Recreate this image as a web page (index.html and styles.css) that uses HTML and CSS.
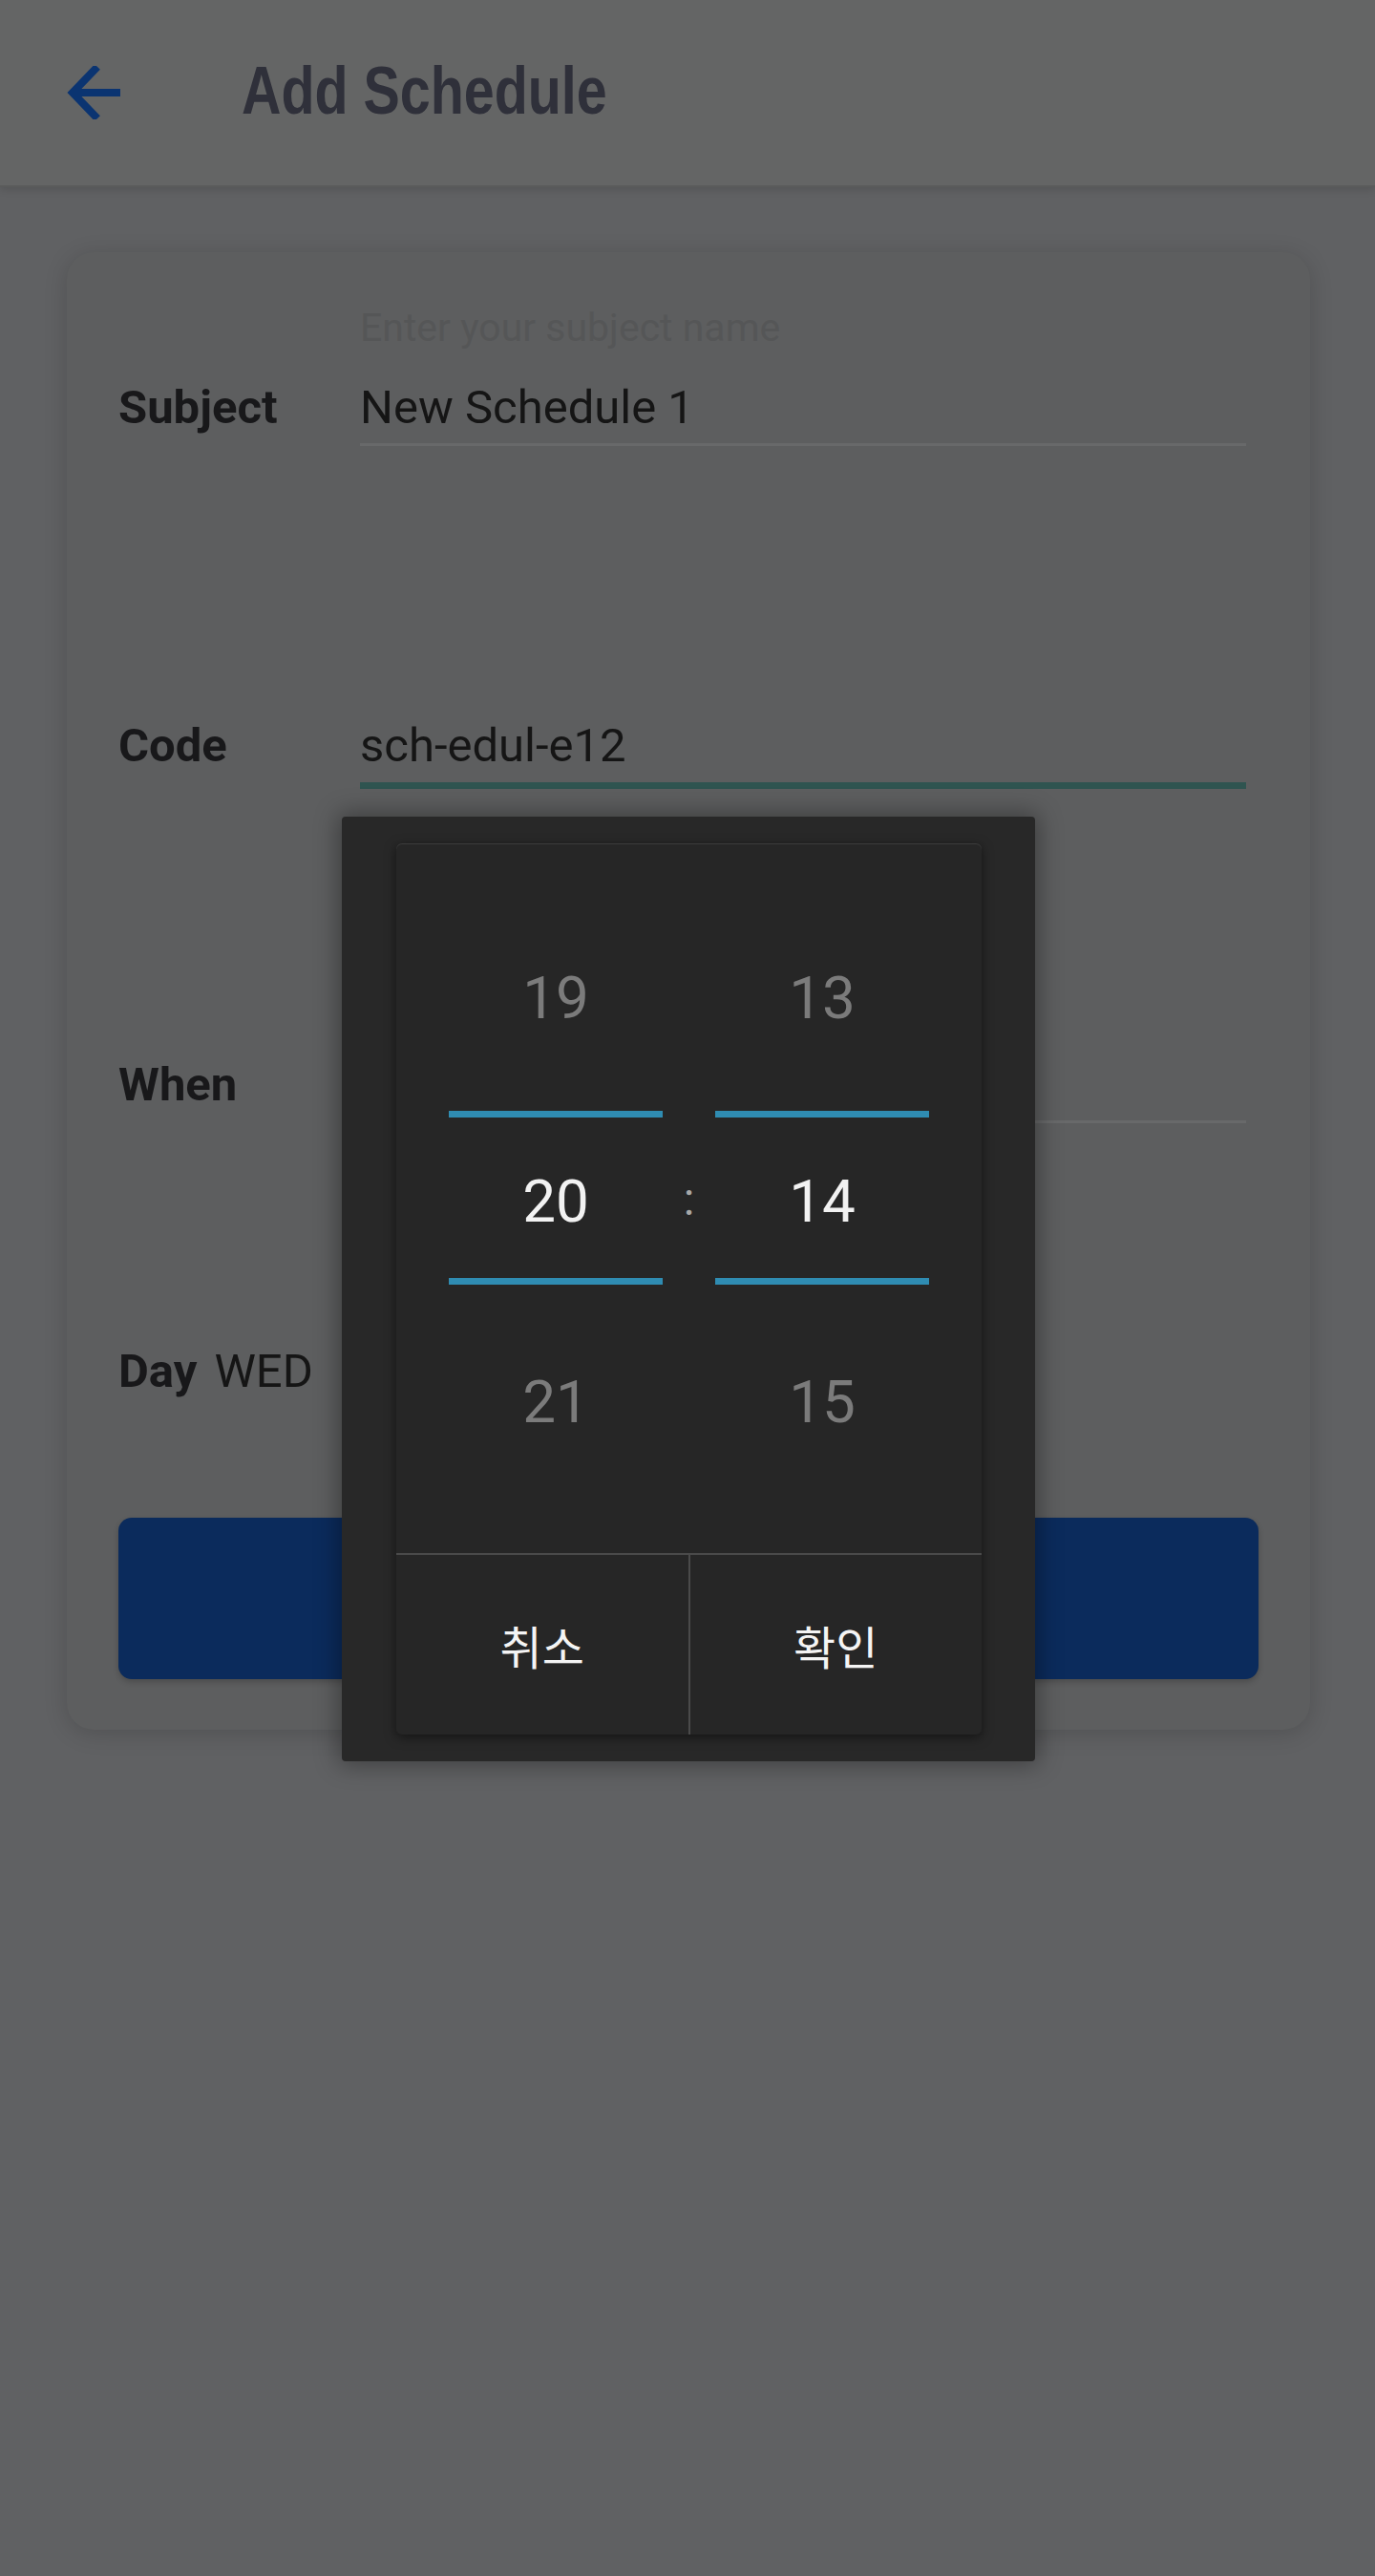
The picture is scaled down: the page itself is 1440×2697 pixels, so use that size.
FILE: index.html
```html
<!DOCTYPE html>
<html lang="en">
<head>
<meta charset="utf-8">
<title>Add Schedule</title>
<link rel="stylesheet" href="styles.css">
</head>
<body>
<header class="appbar">
  <button class="back" aria-label="Back">
    <svg viewBox="0 0 56 56" width="56" height="56" aria-hidden="true">
      <path d="M56 28 H7 M32 1 L6 28 L32 55" fill="none" stroke="#0b3471" stroke-width="8" stroke-linejoin="miter"/>
    </svg>
  </button>
  <h1 class="title">Add Schedule</h1>
</header>

<main class="content">
  <section class="card">
    <div class="field field--subject">
      <span class="hint">Enter your subject name</span>
      <span class="label">Subject</span>
      <div class="input">New Schedule 1</div>
    </div>
    <div class="field field--code">
      <span class="label">Code</span>
      <div class="input input--focused">sch-edul-e12</div>
    </div>
    <div class="field field--when">
      <span class="label">When</span>
      <div class="input"></div>
    </div>
    <div class="day-row">
      <span class="label">Day</span>
      <span class="day-value">WED</span>
    </div>
    <button class="submit" aria-label="Save"></button>
  </section>
</main>

<div class="dialog" role="dialog">
  <div class="panel">
    <div class="picker">
      <div class="wheel">
        <div class="wheel-item">19</div>
        <div class="wheel-divider first"></div>
        <div class="wheel-item selected">20</div>
        <div class="wheel-divider second"></div>
        <div class="wheel-item last">21</div>
      </div>
      <div class="colon">:</div>
      <div class="wheel">
        <div class="wheel-item">13</div>
        <div class="wheel-divider first"></div>
        <div class="wheel-item selected">14</div>
        <div class="wheel-divider second"></div>
        <div class="wheel-item last">15</div>
      </div>
    </div>
    <div class="actions">
      <button class="action">취소</button>
      <button class="action">확인</button>
    </div>
  </div>
</div>
</body>
</html>
```

FILE: styles.css
```css
html {
  background: #606163;
}

body {
  margin: 0;
  min-height: 2697px;
  background: #606163;
  font-family: Roboto, "Noto Sans", sans-serif;
  position: relative;
}

/* App bar */
.appbar {
  height: 194px;
  display: flex;
  align-items: center;
  padding-left: 70px;
  background: #646565;
  border-bottom: 2px solid #5a5b5b;
  box-shadow: 0 3px 8px rgba(0, 0, 0, 0.12);
  position: relative;
  z-index: 1;
}

.back {
  width: 56px;
  height: 56px;
  padding: 0;
  margin: 0 127px 0 0;
  border: 0;
  background: none;
  display: block;
}

.back svg {
  display: block;
}

.title {
  margin: 0;
  padding-bottom: 4px;
  font-family: "Liberation Sans Narrow", "Liberation Sans", Arial, sans-serif;
  font-weight: 700;
  font-size: 70px;
  line-height: 70px;
  color: #2f303a;
  transform: scaleX(0.82);
  transform-origin: left center;
  white-space: nowrap;
}

/* Content */
.content {
  padding: 68px 0 0 70px;
}

.card {
  width: 1302px;
  box-sizing: border-box;
  padding: 55px 54px 53px 54px;
  background: #5d5e5f;
  border-radius: 28px;
  box-shadow: 0 4px 24px rgba(0, 0, 0, 0.16);
}

.field {
  display: grid;
  grid-template-columns: 253px 1fr;
  margin-right: 13px;
}

.hint {
  grid-column: 2;
  grid-row: 1;
  font-size: 41px;
  line-height: 48px;
  color: #555657;
  margin-bottom: 31px;
}

.label {
  grid-column: 1;
  font-weight: 700;
  font-size: 49px;
  line-height: 57px;
  color: #18181a;
}

.field--subject .label,
.field--subject .input {
  grid-row: 2;
}

.input {
  grid-column: 2;
  min-height: 57px;
  font-size: 49px;
  line-height: 57px;
  color: #151515;
  padding-bottom: 9px;
  border-bottom: 3px solid #68696a;
}

.input--focused {
  padding-bottom: 10px;
  border-bottom: 7px solid #2f5450;
}

.field--code {
  margin-top: 285px;
}

.field--when {
  margin-top: 281px;
}

.day-row {
  margin-top: 231px;
  display: flex;
  align-items: baseline;
}

.day-value {
  margin-left: 18px;
  font-size: 49px;
  line-height: 57px;
  color: #151515;
}

.submit {
  display: block;
  width: 100%;
  height: 169px;
  margin-top: 125px;
  border: 0;
  border-radius: 14px;
  background: #0b2b5c;
  box-shadow: 0 3px 6px rgba(0, 0, 0, 0.2);
}

/* Time picker dialog */
.dialog {
  position: absolute;
  left: 358px;
  top: 855px;
  width: 726px;
  height: 989px;
  box-sizing: border-box;
  padding: 28px 56px 28px 57px;
  background: #282828;
  border-radius: 4px;
  box-shadow: 0 0 24px 4px rgba(0, 0, 0, 0.35);
  z-index: 2;
}

.panel {
  height: 933px;
  display: flex;
  flex-direction: column;
  background: #262626;
  border-radius: 6px;
  box-shadow: inset 0 1px 0 #3c3c3c, 0 3px 12px rgba(0, 0, 0, 0.5);
  overflow: hidden;
}

.picker {
  height: 743px;
  display: flex;
  justify-content: center;
  padding: 0 55px;
}

.wheel {
  width: 224px;
  display: flex;
  flex-direction: column;
  padding-top: 127px;
  text-align: center;
}

.wheel-item {
  font-size: 62px;
  line-height: 70px;
  color: #7b7b7b;
}

.wheel-item.selected {
  margin-top: 53px;
  color: #f2f2f2;
}

.wheel-item.last {
  margin-top: 88px;
}

.wheel-divider {
  height: 7px;
  background: #2f8cb2;
}

.wheel-divider.first {
  margin-top: 83px;
}

.wheel-divider.second {
  margin-top: 45px;
}

.colon {
  width: 55px;
  padding-top: 345px;
  text-align: center;
  font-size: 48px;
  line-height: 56px;
  color: #a8a8a8;
}

.actions {
  flex: 1;
  display: flex;
  border-top: 2px solid #4a4a4a;
}

.action {
  flex: 1;
  display: flex;
  align-items: center;
  justify-content: center;
  padding: 0;
  border: 0;
  background: none;
  font-family: Roboto, "Noto Sans CJK KR", sans-serif;
  font-size: 48px;
  color: #f4f4f4;
}

.action + .action {
  border-left: 2px solid #4a4a4a;
}
```
